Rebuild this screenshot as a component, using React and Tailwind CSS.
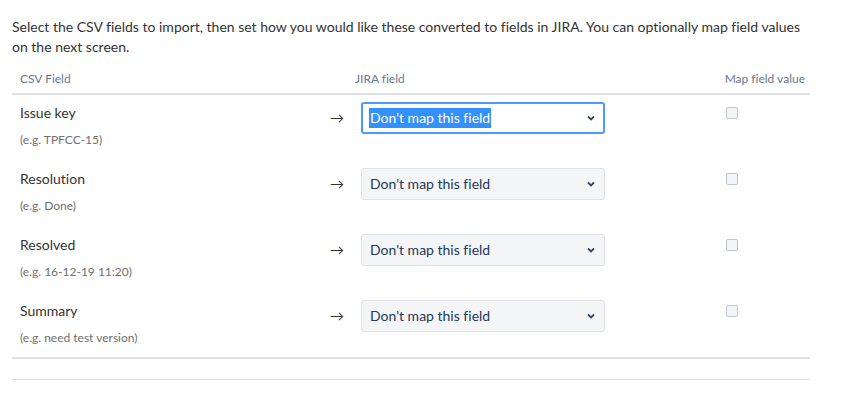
const rows = [
  { name: "Issue key", example: "(e.g. TPFCC-15)", focused: true },
  { name: "Resolution", example: "(e.g. Done)" },
  { name: "Resolved", example: "(e.g. 16-12-19 11:20)" },
  { name: "Summary", example: "(e.g. need test version)" },
];

function Chevron() {
  return (
    <svg width="8" height="6" viewBox="0 0 8 6" className="shrink-0">
      <path d="M1 1.5 L4 4.5 L7 1.5" fill="none" stroke="#344563" strokeWidth="1.8" />
    </svg>
  );
}

function FakeSelect({ focused }) {
  if (focused) {
    return (
      <div className="w-[244px] h-[32px] flex items-center justify-between pl-[6px] pr-[8px] bg-white border-2 border-[#4c9aff] rounded-[3px]">
        <span className="bg-[#3390ff] text-white leading-[20px] px-px">Don't map this field</span>
        <Chevron />
      </div>
    );
  }
  return (
    <div className="w-[244px] h-[32px] flex items-center justify-between pl-[7px] pr-[9px] bg-[#f4f5f7] border border-[#dfe1e6] rounded-[3px]">
      <span className="text-[#253858] leading-[20px] px-px">Don't map this field</span>
      <Chevron />
    </div>
  );
}

export default function App() {
  return (
    <div className="w-[853px] h-[393px] bg-white overflow-hidden font-['Segoe_UI','Lato','Liberation_Sans',sans-serif] [font-variant-ligatures:none] text-[14px] text-[#333]">
      <div className="pl-[12px] pt-[17px]">
        <p className="leading-[20px] text-[#333] w-[804px]">
          Select the CSV fields to import, then set how you would like these converted to fields in JIRA. You can optionally map field values on the next screen.
        </p>

        <div className="w-[798px]">
          <div className="flex h-[38px] pt-[14px] leading-[16px] border-b-2 border-[#dfe1e6] text-[12px] text-[#6b778c]">
            <div className="w-[343px] pl-[8px]">CSV Field</div>
            <div className="flex-1">JIRA field</div>
            <div className="pr-[5px]">Map field value</div>
          </div>

          {rows.map((r, i) => (
            <div
              key={r.name}
              className={
                i === rows.length - 1
                  ? "flex h-[66px] pt-[7px] border-b-2 border-[#dfe1e6]"
                  : "flex h-[66px] pt-[7px]"
              }
            >
              <div className="w-[308px] pl-[8px]">
                <div className="leading-[20px] mt-[1px] text-[#333]">{r.name}</div>
                <div className="text-[12px] leading-[14px] mt-[10px] text-[#707070]">{r.example}</div>
              </div>
              <div className="w-[41px] pl-[10px] leading-[16px] mt-[8px] text-[#333]">→</div>
              <FakeSelect focused={r.focused} />
              <div className="ml-[121px] mt-[5px]">
                <div className="w-[12px] h-[12px] rounded-[2px] border border-[#c1c7d0] bg-[#f4f5f7]" />
              </div>
            </div>
          ))}

          <div className="h-[21px] border-b border-[#dfe1e6]" />
        </div>
      </div>
    </div>
  );
}
